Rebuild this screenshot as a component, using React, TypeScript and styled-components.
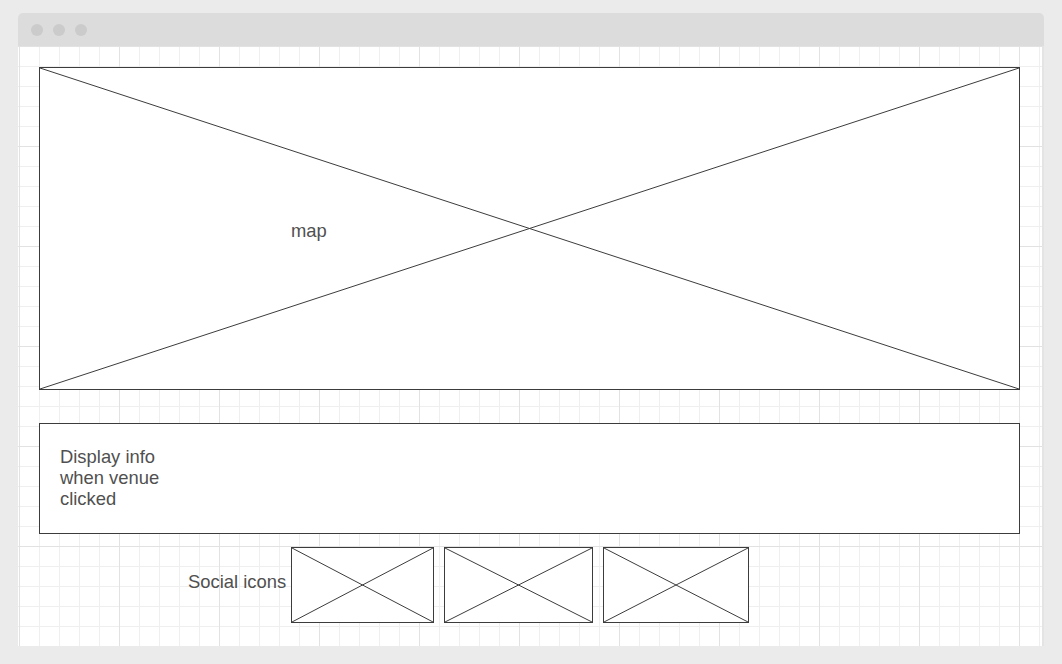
import React, { FunctionComponent } from 'react';
import styled, { createGlobalStyle } from 'styled-components';

const GlobalStyle = createGlobalStyle`
html, body {
    margin: 0;
    padding: 0;
    background: #ebebeb;
    font-family: "Liberation Sans", Arial, sans-serif;
}
`;

const Page = styled.div`
width: 1062px;
height: 664px;
padding: 13px 0 0 18px;
box-sizing: border-box;
`;

const Window = styled.div`
width: 1026px;
height: 633px;
display: flex;
flex-direction: column;
border-radius: 5px 5px 0 0;
overflow: hidden;
`;

const TitleBar = styled.div`
height: 33px;
flex: none;
background: #dcdcdc;
display: flex;
align-items: center;
gap: 10px;
padding-left: 13px;
`;

const Dot = styled.span`
width: 12px;
height: 12px;
border-radius: 50%;
background: #cbcbcb;
`;

const Canvas = styled.div`
flex: 1;
background-color: #ffffff;
background-image:
    linear-gradient(to right, #e2e2e2 1px, transparent 1px),
    linear-gradient(to bottom, #e2e2e2 1px, transparent 1px),
    linear-gradient(to right, #efefef 1px, transparent 1px),
    linear-gradient(to bottom, #efefef 1px, transparent 1px);
background-size: 100px 100px, 100px 100px, 20px 20px, 20px 20px;
background-position: 1px 0, 0 0, 1px 0, 0 0;
border-right: 2px solid #e4e4e4;
padding: 21px 0 0 21px;
display: flex;
flex-direction: column;
`;

const Placeholder = styled.div<{ $w: number; $h: number }>`
position: relative;
width: ${p => p.$w}px;
height: ${p => p.$h}px;
box-sizing: border-box;
border: 1px solid #3c3c3c;
background: #ffffff;
flex: none;
`;

const Cross = styled.svg`
position: absolute;
inset: 0;
width: 100%;
height: 100%;
`;

const MapLabel = styled.div`
position: absolute;
left: 251px;
top: 152px;
font-size: 18.4px;
color: #505050;
`;

const InfoBox = styled.div`
width: 981px;
height: 111px;
box-sizing: border-box;
border: 1px solid #3c3c3c;
background: #ffffff;
margin-top: 33px;
padding: 22px 20px;
font-size: 18.4px;
line-height: 21px;
color: #505050;
`;

const SocialRow = styled.div`
display: flex;
align-items: center;
margin-top: 13px;
padding-left: 149px;
`;

const SocialLabel = styled.span`
font-size: 18.4px;
color: #505050;
margin-right: 5px;
padding-bottom: 7px;
`;

const SocialBoxes = styled.div`
display: flex;
gap: 10px;
`;

const XBox: FunctionComponent<{ w: number; h: number; children?: React.ReactNode }> = ({ w, h, children }) => (
    <Placeholder $w={w} $h={h}>
        <Cross viewBox="0 0 100 100" preserveAspectRatio="none">
            <line x1="0" y1="0" x2="100" y2="100" stroke="#3c3c3c" strokeWidth="1" vectorEffect="non-scaling-stroke" />
            <line x1="100" y1="0" x2="0" y2="100" stroke="#3c3c3c" strokeWidth="1" vectorEffect="non-scaling-stroke" />
        </Cross>
        {children}
    </Placeholder>
);

export default function App() {
    return (
        <Page>
            <GlobalStyle />
            <Window>
                <TitleBar>
                    <Dot />
                    <Dot />
                    <Dot />
                </TitleBar>
                <Canvas>
                    <XBox w={981} h={323}>
                        <MapLabel>map</MapLabel>
                    </XBox>
                    <InfoBox>
                        Display info<br />
                        when venue<br />
                        clicked
                    </InfoBox>
                    <SocialRow>
                        <SocialLabel>Social icons</SocialLabel>
                        <SocialBoxes>
                            <XBox w={143} h={76} />
                            <XBox w={149} h={76} />
                            <XBox w={146} h={76} />
                        </SocialBoxes>
                    </SocialRow>
                </Canvas>
            </Window>
        </Page>
    );
}
